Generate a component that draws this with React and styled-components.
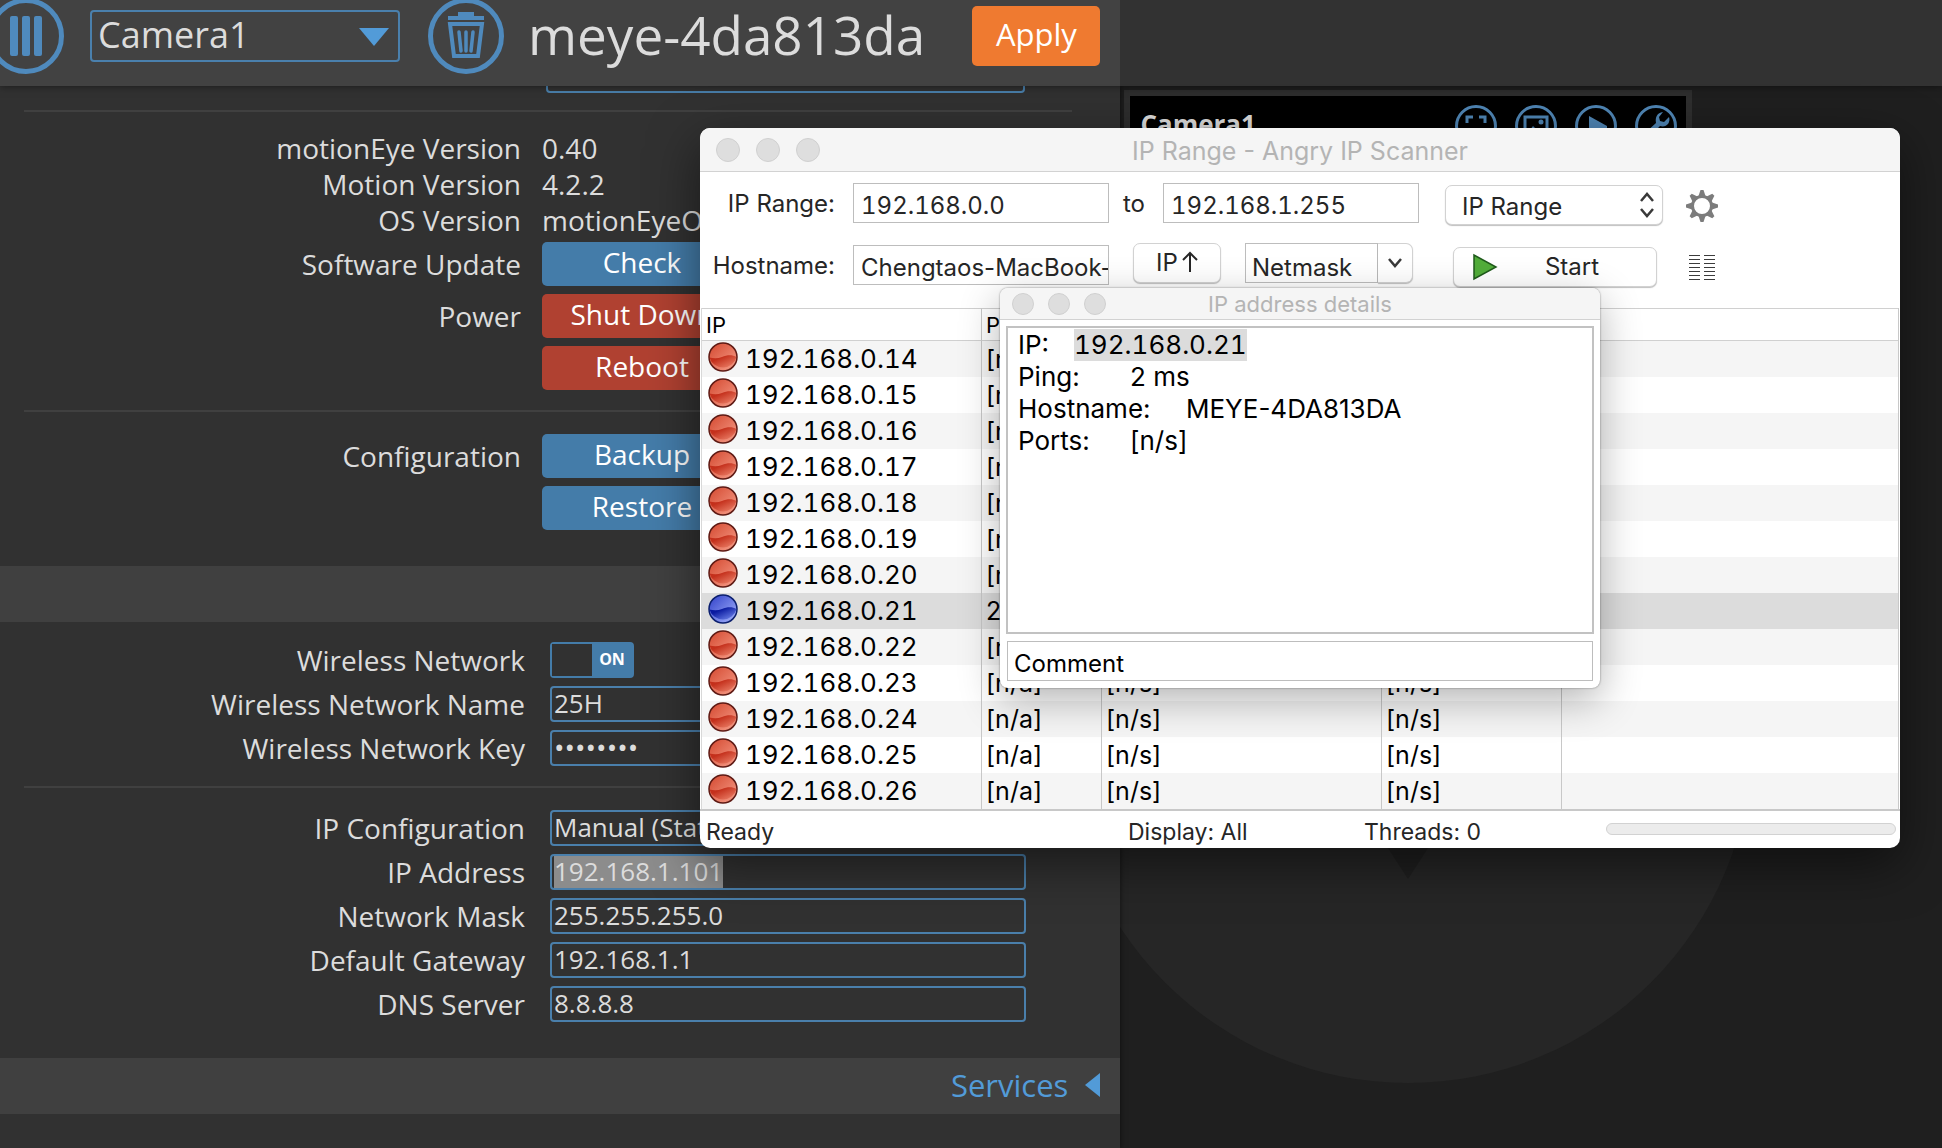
import React, { useEffect, useRef, useState } from "react";
import styled, { createGlobalStyle } from "styled-components";

const hosts = Array.from({ length: 13 }, (_, i) => {
  const last = 14 + i;
  const alive = last === 21;
  return {
    ip: `192.168.0.${last}`,
    alive,
    ping: alive ? "2 ms" : "[n/a]",
    hostname: alive ? "MEYE-4DA813DA" : "[n/s]",
    ports: "[n/s]",
  };
});

const Ball = ({ alive }) => (
  <BallIcon viewBox="0 0 30 30" aria-hidden="true">
    <defs>
      <linearGradient id={alive ? "up-top" : "down-top"} x1="0" y1="0" x2="1" y2="1">
        <stop offset="0" stopColor={alive ? "#2f3fc8" : "#d4482f"} />
        <stop offset="1" stopColor={alive ? "#a9b8ff" : "#f7a08c"} />
      </linearGradient>
      <linearGradient id={alive ? "up-low" : "down-low"} x1="0" y1="0" x2="1" y2="1">
        <stop offset="0.3" stopColor={alive ? "#0a1aa0" : "#c4301c"} />
        <stop offset="1" stopColor={alive ? "#7d93f5" : "#f08a72"} />
      </linearGradient>
    </defs>
    <circle cx="15" cy="15" r="14" fill={`url(#${alive ? "up-top" : "down-top"})`} />
    <path
      d="M1.5 15.5C6 16.5 10 16.5 14 15C19 13 24 12.500 28.500 15A14 14 0 0 1 1.500 15.500Z"
      fill={`url(#${alive ? "up-low" : "down-low"})`}
    />
    <circle cx="15" cy="15" r="14" fill="none" stroke={alive ? "#0b1f6e" : "#5e1a14"} strokeWidth="1.500" />
  </BallIcon>
);

const MenuIcon = () => (
  <svg width="76" height="76" viewBox="0 0 76 76" aria-hidden="true">
    <circle cx="38" cy="38" r="35.500" fill="none" stroke="#4f8abd" strokeWidth="5" />
    <g fill="#4f8abd">
      <rect x="22" y="18" width="8" height="40" rx="2" />
      <rect x="34" y="18" width="8" height="40" rx="2" />
      <rect x="46" y="18" width="8" height="40" rx="2" />
    </g>
  </svg>
);

const TrashIcon = () => (
  <svg width="76" height="76" viewBox="0 0 76 76" aria-hidden="true">
    <circle cx="38" cy="38" r="35.500" fill="none" stroke="#4f8abd" strokeWidth="5" />
    <path d="M20 18h10v-4h16v4h10v4H20z" fill="#4f8abd" />
    <path d="M22 26h32l-4 32H26z" fill="none" stroke="#4f8abd" strokeWidth="4" />
    <path d="M31 34l2 19M38 34v19M45 34l-2 19" stroke="#4f8abd" strokeWidth="3.500" strokeLinecap="round" />
  </svg>
);

const GearIcon = () => (
  <svg width="32" height="32" viewBox="-16 -16 32 32" aria-hidden="true">
    <circle r="9.500" fill="none" stroke="#7c7c7c" strokeWidth="3" />
    {[0, 45, 90, 135, 180, 225, 270, 315].map((a) => (
      <path key={a} d="M-3.500 -10L-1.500 -16H1.500L3.500 -10Z" fill="#7c7c7c" transform={`rotate(${a})`} />
    ))}
  </svg>
);

const StatsIcon = () => (
  <svg width="28" height="28" viewBox="0 0 28 28" aria-hidden="true">
    <path
      d="M1 1.500h11M1 5.500h11M1 9.500h11M1 13.500h11M1 17.500h11M1 21.500h11M1 25.500h11M16 1.500h11M16 5.500h11M16 9.500h11M16 13.500h11M16 17.500h11M16 21.500h11M16 25.500h11"
      stroke="#3c3c3c"
    />
  </svg>
);

const cameraIcons = [
  ["Fullscreen", <path key="f" d="M12 18v-6h6M24 12h6v6M12 24v6h6M24 30h6v-6" fill="none" strokeWidth="3" />],
  [
    "Pictures",
    <g key="p">
      <rect x="10" y="12" width="22" height="19" fill="none" strokeWidth="3" />
      <circle cx="26" cy="17" r="2.500" fill="#4f85b4" strokeWidth="0" />
      <path d="M12 29l6-8 4 4 3-2 5 6z" fill="#4f85b4" strokeWidth="0" />
    </g>,
  ],
  ["Movies", <path key="m" d="M14 11l18 10v2L14 33z" fill="#4f85b4" strokeWidth="0" />],
  [
    "Configure",
    <path
      key="c"
      d="M28 7l-4 5 1 4 4 1 5-5c2 6-3 11-9 9L14 32c-3 1-5-2-4-4l11-10c-1-6 1-10 7-11z"
      fill="#4f85b4"
      strokeWidth="0"
    />,
  ],
];

const App = () => {
  const [wifi, setWifi] = useState(true);
  const [net, setNet] = useState({
    mask: "255.255.255.0",
    gateway: "192.168.1.1",
    dns: "8.8.8.8",
  });
  const addressRef = useRef(null);

  // start with the address ready to be replaced
  useEffect(() => {
    addressRef.current.focus();
    addressRef.current.select();
  }, []);

  const change = (key) => (event) => setNet({ ...net, [key]: event.target.value });

  return (
    <Page>
      <GlobalStyle />
      <Header>
        <HeaderLeft>
          <RoundButton aria-label="Menu" $edge>
            <MenuIcon />
          </RoundButton>
          <SelectWrap>
            <CameraSelect aria-label="Camera" defaultValue="Camera1">
              <option>Camera1</option>
            </CameraSelect>
            <CameraArrow />
          </SelectWrap>
          <RoundButton aria-label="Remove camera">
            <TrashIcon />
          </RoundButton>
          <HostTitle>meye-4da813da</HostTitle>
          <ApplyButton>Apply</ApplyButton>
        </HeaderLeft>
      </Header>

      <Body>
        <Settings>
          <HiddenRow>
            <TextInput aria-label="Time zone" />
          </HiddenRow>
          <Divider $top={20} />
          <Info>
            <InfoRow><span>motionEye Version</span><span>0.40</span></InfoRow>
            <InfoRow><span>Motion Version</span><span>4.2.2</span></InfoRow>
            <InfoRow><span>OS Version</span><span>motionEyeOS</span></InfoRow>
          </Info>
          <ButtonRows>
            <ButtonRow><span>Software Update</span><PanelButton>Check</PanelButton></ButtonRow>
            <ButtonRow><span>Power</span><PanelButton $danger>Shut Down</PanelButton></ButtonRow>
            <ButtonRow><span /><PanelButton $danger>Reboot</PanelButton></ButtonRow>
          </ButtonRows>
          <Divider $top={20} />
          <ButtonRows $spaced>
            <ButtonRow><span>Configuration</span><PanelButton>Backup</PanelButton></ButtonRow>
            <ButtonRow><span /><PanelButton>Restore</PanelButton></ButtonRow>
          </ButtonRows>

          <SectionBar $top={36} />

          <Fields $top={20}>
            <FieldRow>
              <label htmlFor="wifi">Wireless Network</label>
              <Switch>
                <input id="wifi" type="checkbox" checked={wifi} onChange={() => setWifi(!wifi)} />
                <SwitchKnob />
                <SwitchText>{wifi ? "ON" : "OFF"}</SwitchText>
              </Switch>
            </FieldRow>
            <FieldRow>
              <label htmlFor="ssid">Wireless Network Name</label>
              <TextInput id="ssid" defaultValue="25H" />
            </FieldRow>
            <FieldRow>
              <label htmlFor="key">Wireless Network Key</label>
              <TextInput id="key" type="password" defaultValue="password" />
            </FieldRow>
          </Fields>
          <Divider $top={20} />
          <Fields $top={22}>
            <FieldRow>
              <label htmlFor="ipconf">IP Configuration</label>
              <FieldSelect id="ipconf" defaultValue="manual">
                <option value="manual">Manual (Static IP)</option>
                <option value="dhcp">Automatic (DHCP)</option>
              </FieldSelect>
            </FieldRow>
            <FieldRow>
              <label htmlFor="address">IP Address</label>
              <TextInput id="address" ref={addressRef} defaultValue="192.168.1.101" />
            </FieldRow>
            <FieldRow>
              <label htmlFor="mask">Network Mask</label>
              <TextInput id="mask" value={net.mask} onChange={change("mask")} />
            </FieldRow>
            <FieldRow>
              <label htmlFor="gateway">Default Gateway</label>
              <TextInput id="gateway" value={net.gateway} onChange={change("gateway")} />
            </FieldRow>
            <FieldRow>
              <label htmlFor="dns">DNS Server</label>
              <TextInput id="dns" value={net.dns} onChange={change("dns")} />
            </FieldRow>
          </Fields>
          <SectionBar $top={36}>
            Services
            <svg width="16" height="26" viewBox="0 0 16 26" aria-hidden="true">
              <path d="M16 1v24L1 13z" fill="#529bd8" />
            </svg>
          </SectionBar>
        </Settings>

        <Viewer>
          <EyeLogo viewBox="0 0 688 688" aria-hidden="true">
            <circle cx="344" cy="344" r="344" fill="#262626" />
            <path d="M270 370h148L344 484z" fill="#1f1f1f" />
          </EyeLogo>
          <CameraFrame>
            <CameraBar>
              <strong>Camera1</strong>
              {cameraIcons.map(([name, icon]) => (
                <CameraButton key={name} aria-label={name}>
                  <svg width="42" height="42" viewBox="0 0 42 42" stroke="#4f85b4">
                    <circle cx="21" cy="21" r="19.500" fill="none" strokeWidth="3" />
                    {icon}
                  </svg>
                </CameraButton>
              ))}
            </CameraBar>
          </CameraFrame>
        </Viewer>
      </Body>

      <ScannerWindow>
        <TitleBar>
          <Lights><i /><i /><i /></Lights>
          IP Range - Angry IP Scanner
        </TitleBar>
        <Toolbar>
          <ToolLabel htmlFor="from">IP Range:</ToolLabel>
          <ToolInput id="from" $digits defaultValue="192.168.0.0" />
          <Middle>
            <ToolLabel htmlFor="to">to</ToolLabel>
            <ToolInput id="to" $digits defaultValue="192.168.1.255" />
          </Middle>
          <MacSelectWrap>
            <MacSelect aria-label="Feeder" defaultValue="IP Range">
              <option>IP Range</option>
            </MacSelect>
            <svg width="16" height="26" viewBox="0 0 16 26" aria-hidden="true">
              <path d="M2 9l6-7 6 7M2 17l6 7 6-7" fill="none" stroke="#3a3a3a" strokeWidth="2.500" />
            </svg>
          </MacSelectWrap>
          <IconButton aria-label="Preferences"><GearIcon /></IconButton>

          <ToolLabel htmlFor="host">Hostname:</ToolLabel>
          <ToolInput id="host" defaultValue="Chengtaos-MacBook-Pro" />
          <Middle $second>
            <MacButton>
              IP
              <svg width="16" height="22" viewBox="0 0 16 22" aria-hidden="true">
                <path d="M8 21V2M1 9l7-7 7 7" fill="none" stroke="#262626" strokeWidth="2" />
              </svg>
            </MacButton>
            <NetmaskBox>
              <input aria-label="Netmask" defaultValue="Netmask" />
              <button aria-label="Choose netmask">
                <svg width="16" height="12" viewBox="0 0 16 12" aria-hidden="true">
                  <path d="M2 2l6 7 6-7" fill="none" stroke="#3a3a3a" strokeWidth="2.500" />
                </svg>
              </button>
            </NetmaskBox>
          </Middle>
          <StartButton>
            <svg width="26" height="28" viewBox="0 0 26 28" aria-hidden="true">
              <path d="M2 2v24l22-12z" fill="#52ae3a" stroke="#1f5a1b" strokeWidth="1.500" />
            </svg>
            <span>Start</span>
          </StartButton>
          <IconButton aria-label="Statistics"><StatsIcon /></IconButton>
        </Toolbar>

        <HostTable>
          <colgroup>
            <col width="279" />
            <col width="120" />
            <col width="280" />
            <col width="180" />
            <col />
          </colgroup>
          <thead>
            <tr>
              <th>IP</th>
              <th>Ping</th>
              <th>Hostname</th>
              <th>Ports</th>
              <th />
            </tr>
          </thead>
          <tbody>
            {hosts.map((host) => (
              <HostRow key={host.ip} $selected={host.alive}>
                <td>
                  <Ball alive={host.alive} />
                  {host.ip}
                </td>
                <td>{host.ping}</td>
                <td>{host.hostname}</td>
                <td>{host.ports}</td>
                <td />
              </HostRow>
            ))}
          </tbody>
        </HostTable>

        <StatusBar>
          <span>Ready</span>
          <span>Display: All</span>
          <span>Threads: 0</span>
          <Progress />
        </StatusBar>
      </ScannerWindow>

      <DetailsWindow>
        <TitleBar $small>
          <Lights $small><i /><i /><i /></Lights>
          IP address details
        </TitleBar>
        <DetailsText>
          {"IP:\t"}<mark>192.168.0.21</mark>
          {"\nPing:\t2 ms\nHostname:\tMEYE-4DA813DA\nPorts:\t[n/s]"}
        </DetailsText>
        <CommentInput aria-label="Comment" defaultValue="Comment" />
      </DetailsWindow>
    </Page>
  );
};

const GlobalStyle = createGlobalStyle`
  * {
    box-sizing: border-box;
  }

  body {
    margin: 0;
    background: #1f1f1f;
  }

  button, input, select {
    font: inherit;
    color: inherit;
  }

  button {
    cursor: pointer;
  }
`;

const Page = styled.div`
  position: relative;
  display: flex;
  flex-direction: column;
  height: 100vh;
  overflow: hidden;
  color: #dcdcdc;
  font-family: "Open Sans", sans-serif;
  font-size: 28px;
`;

const Header = styled.header`
  position: relative;
  z-index: 2;
  display: grid;
  grid-template-columns: 15fr 11fr;
  flex: none;
  background: #323232;
  box-shadow: 0 0 8px rgba(0, 0, 0, 0.5);
`;

const HeaderLeft = styled.div`
  display: flex;
  align-items: center;
  height: 86px;
  padding: 0 20px 14px 0;
  background: #424242;
`;

const RoundButton = styled.button`
  flex: none;
  display: flex;
  margin: 0;
  margin-left: ${(props) => (props.$edge ? "-12px" : "28px")};
  padding: 0;
  border: none;
  background: none;
`;

const SelectWrap = styled.div`
  position: relative;
  flex: none;
  width: 310px;
  margin-left: 26px;
`;

const CameraSelect = styled.select`
  display: block;
  appearance: none;
  width: 100%;
  height: 52px;
  padding: 0 6px 2px;
  border: 2px solid #4a80ad;
  border-radius: 4px;
  background: transparent;
  font-size: 36px;
  line-height: 44px;
`;

const CameraArrow = styled.span`
  position: absolute;
  top: 18px;
  right: 11px;
  border: 15px solid transparent;
  border-top: 18px solid #529bd8;
  border-bottom: none;
  pointer-events: none;
`;

const HostTitle = styled.div`
  flex: 1;
  margin-left: 24px;
  padding-bottom: 2px;
  font-size: 53px;
  line-height: 64px;
  white-space: nowrap;
`;

const ApplyButton = styled.button`
  width: 128px;
  height: 60px;
  padding: 0 0 4px;
  border: none;
  border-radius: 5px;
  background: #ef7a30;
  color: #fff;
  font-size: 31px;
`;

const Body = styled.div`
  display: grid;
  grid-template-columns: 15fr 11fr;
  flex: 1;
  min-height: 0;
`;

const Settings = styled.section`
  position: relative;
  z-index: 1;
  background: #313131;
  box-shadow: 0 0 6px rgba(0, 0, 0, 0.6);
`;

const HiddenRow = styled.div`
  height: 36px;
  margin-top: -32px;
  padding: 0 95px 0 546px;
`;

const Divider = styled.hr`
  height: 2px;
  margin: ${(props) => props.$top}px 48px 0 24px;
  border: none;
  background: #404040;
`;

const Info = styled.div`
  padding-top: 18px;
`;

const InfoRow = styled.div`
  display: grid;
  grid-template-columns: 521px 1fr;
  column-gap: 21px;
  line-height: 36px;

  span:first-child {
    text-align: right;
  }
`;

const ButtonRows = styled.div`
  display: flex;
  flex-direction: column;
  gap: 8px;
  padding-top: ${(props) => (props.$spaced ? "22px" : "4px")};
`;

const ButtonRow = styled(InfoRow)`
  line-height: 44px;
`;

const PanelButton = styled.button`
  width: 200px;
  height: 44px;
  padding: 0 0 4px;
  border: none;
  border-radius: 5px;
  background: ${(props) => (props.$danger ? "#b04131" : "#447ca9")};
  color: #fff;
  line-height: 40px;
`;

const SectionBar = styled.div`
  display: flex;
  align-items: center;
  justify-content: flex-end;
  gap: 16px;
  height: 56px;
  margin-top: ${(props) => props.$top}px;
  padding: 0 20px 2px 0;
  background: #404040;
  color: #529bd8;
  font-size: 31px;
`;

const Fields = styled.div`
  display: flex;
  flex-direction: column;
  gap: 8px;
  padding-top: ${(props) => props.$top}px;
`;

const FieldRow = styled.div`
  display: grid;
  grid-template-columns: 525px 1fr;
  column-gap: 25px;
  padding-right: 94px;
  line-height: 36px;

  > label:first-child {
    text-align: right;
  }
`;

const TextInput = styled.input`
  width: 100%;
  height: 36px;
  padding: 0 2px 2px;
  border: 2px solid #4a7fab;
  border-radius: 4px;
  outline: none;
  background: transparent;
  font-size: 26px;
  line-height: 28px;

  &[type="password"] {
    font-size: 28px;
  }

  &::selection {
    background: #8c8c8c;
    color: #dcdcdc;
  }
`;

const FieldSelect = styled(TextInput).attrs({ as: "select" })`
  appearance: none;
`;

const Switch = styled.label`
  display: flex;
  width: 84px;
  height: 36px;
  border: 2px solid #447ca9;
  border-radius: 4px;
  background: #447ca9;
  cursor: pointer;

  input {
    position: absolute;
    opacity: 0;
  }
`;

const SwitchKnob = styled.span`
  width: 40px;
  background: #313131;
`;

const SwitchText = styled.span`
  flex: 1;
  color: #fff;
  font-size: 16px;
  font-weight: bold;
  line-height: 30px;
  text-align: center;
`;

const Viewer = styled.main`
  position: relative;
  padding: 4px 250px 0 4px;
  background: #1f1f1f;
`;

const EyeLogo = styled.svg`
  position: absolute;
  top: 309px;
  left: -56px;
  width: 688px;
  height: 688px;
`;

const CameraFrame = styled.div`
  position: relative;
  height: 420px;
  padding: 6px;
  background: #2e2e2e;
`;

const CameraBar = styled.div`
  display: flex;
  align-items: flex-start;
  gap: 18px;
  height: 100%;
  padding: 9px 9px 0 10px;
  background: #000;

  strong {
    flex: 1;
    color: #dcdcdc;
    font-size: 26px;
    line-height: 38px;
  }
`;

const CameraButton = styled.button`
  display: flex;
  padding: 0;
  border: none;
  background: none;
`;

const MacWindow = styled.div`
  position: absolute;
  z-index: 3;
  display: flex;
  flex-direction: column;
  background: #fff;
  color: #262626;
  font-family: Inter, "Liberation Sans", sans-serif;
`;

const ScannerWindow = styled(MacWindow)`
  top: 128px;
  left: 700px;
  width: 1200px;
  height: 720px;
  overflow: clip;
  border-radius: 10px;
  box-shadow: 0 16px 50px rgba(0, 0, 0, 0.5);
  font-size: 24px;
`;

const DetailsWindow = styled(MacWindow)`
  top: 288px;
  left: 1000px;
  width: 600px;
  height: 400px;
  overflow: clip;
  border-radius: 8px;
  box-shadow: 0 0 2px rgba(0, 0, 0, 0.5), 0 12px 40px rgba(0, 0, 0, 0.3);
  color: #000;
`;

const TitleBar = styled.div`
  position: relative;
  flex: none;
  height: ${(props) => (props.$small ? "32px" : "44px")};
  border-bottom: 1px solid #d2d2d2;
  background: #f5f5f5;
  color: #b4b4b4;
  font-size: ${(props) => (props.$small ? "22px" : "25px")};
  line-height: ${(props) => (props.$small ? "32px" : "46px")};
  text-align: center;
`;

const Lights = styled.div`
  position: absolute;
  inset: 0 auto 0 ${(props) => (props.$small ? "12px" : "16px")};
  display: flex;
  align-items: center;
  gap: ${(props) => (props.$small ? "14px" : "16px")};

  i {
    width: ${(props) => (props.$small ? "22px" : "24px")};
    aspect-ratio: 1;
    border: 1px solid #d0d0d0;
    border-radius: 50%;
    background: #dedede;
  }
`;

const Toolbar = styled.div`
  display: grid;
  grid-template-columns: 135px 274px 310px 244px 1fr;
  grid-template-rows: 40px 40px;
  gap: 22px 0;
  align-items: center;
  align-content: start;
  flex: none;
  height: 136px;
  padding-top: 11px;
`;

const ToolLabel = styled.label`
  text-align: right;
`;

const ToolInput = styled.input`
  width: 256px;
  height: 40px;
  margin-left: 18px;
  padding: 4px 0 0 7px;
  border: 1px solid #bdbdbd;
  background: #fff;
  outline: none;
  font-variant-numeric: ${(props) => (props.$digits ? "tabular-nums" : "normal")};
`;

const Middle = styled.div`
  display: flex;
  align-items: center;
  gap: ${(props) => (props.$second ? "24px" : "0")};
  margin-top: ${(props) => (props.$second ? "-4px" : "0")};
  padding-left: ${(props) => (props.$second ? "24px" : "14px")};
`;

const MacButton = styled.button`
  display: flex;
  flex: none;
  align-items: center;
  justify-content: center;
  gap: 4px;
  width: 88px;
  height: 40px;
  padding: 0 0 2px;
  border: 1px solid #d2d2d2;
  border-radius: 7px;
  background: #fff;
  box-shadow: 0 1px 1px rgba(0, 0, 0, 0.25);
`;

const MacSelectWrap = styled.div`
  position: relative;
  margin: 3px 0 0 26px;

  svg {
    position: absolute;
    top: 7px;
    right: 8px;
    pointer-events: none;
  }
`;

const MacSelect = styled.select`
  display: block;
  appearance: none;
  width: 100%;
  height: 40px;
  padding: 4px 16px 0;
  border: 1px solid #d2d2d2;
  border-radius: 7px;
  background: #fff;
  box-shadow: 0 1px 1px rgba(0, 0, 0, 0.25);
`;

const IconButton = styled.button`
  display: flex;
  justify-content: center;
  width: 32px;
  margin: 6px 0 0 23px;
  padding: 0;
  border: none;
  background: none;
`;

const NetmaskBox = styled.div`
  display: flex;
  width: 168px;
  height: 40px;

  input {
    flex: 1;
    min-width: 0;
    padding: 9px 0 0 6px;
    border: 1px solid #bdbdbd;
    outline: none;
    background: #fff;
  }

  button {
    display: flex;
    align-items: center;
    justify-content: center;
    width: 35px;
    padding: 0;
    border: 1px solid #d2d2d2;
    border-left: none;
    border-radius: 0 7px 7px 0;
    background: #fff;
    box-shadow: 0 1px 1px rgba(0, 0, 0, 0.25);
  }
`;

const StartButton = styled(MacButton)`
  gap: 0;
  width: 204px;
  margin: 3px 0 0 34px;
  padding: 0 10px 0 18px;

  span {
    flex: 1;
    text-align: center;
  }
`;

const HostTable = styled.table`
  flex: none;
  width: 1198px;
  margin: 0 1px;
  border-collapse: separate;
  border-spacing: 0;
  border-left: 1px solid #d8d8d8;
  border-right: 1px solid #c8c8c8;
  table-layout: fixed;
  color: #000;

  th {
    height: 33px;
    padding: 0 4px;
    border-top: 1px solid #d0d0d0;
    border-bottom: 1px solid #d0d0d0;
    font-size: 22px;
    font-weight: normal;
    line-height: 30px;
    text-align: left;
  }

  td {
    height: 36px;
    padding: 0 4px 1px;
    font-size: 25px;
    line-height: 34px;
    white-space: nowrap;
  }

  td:first-child {
    font-size: 26px;
    font-variant-numeric: tabular-nums;
  }

  th + th, td + td {
    border-left: 1px solid #c8c8c8;
  }
`;

const HostRow = styled.tr`
  background: #fff;

  &:nth-child(odd) {
    background: #f5f5f5;
  }

  && {
    ${(props) => props.$selected && "background: #dcdcdc;"}
  }
`;

const BallIcon = styled.svg`
  width: 30px;
  height: 30px;
  margin: -7px 7px 0 2px;
  vertical-align: middle;
`;

const StatusBar = styled.div`
  display: grid;
  grid-template-columns: 422px 236px 1fr 290px;
  align-items: center;
  flex: 1;
  padding: 4px 4px 0 6px;
  border-top: 2px solid #c8c8c8;
  font-size: 23px;
`;

const Progress = styled.div`
  height: 12px;
  margin-bottom: 6px;
  border: 1px solid #d2d2d2;
  border-radius: 6px;
  background: #ececec;
`;

const DetailsText = styled.pre`
  flex: 1;
  margin: 6px 6px 7px;
  padding: 1px 10px 0;
  border: 2px solid #c2c2c2;
  font-family: inherit;
  font-size: 26px;
  line-height: 32px;
  tab-size: 56px;

  mark {
    display: inline-block;
    background: #dcdcdc;
    color: inherit;
    font-variant-numeric: tabular-nums;
  }
`;

const CommentInput = styled.input`
  height: 40px;
  margin: 0 7px 7px;
  padding: 5px 6px 0;
  border: 1px solid #bdbdbd;
  outline: none;
  font-size: 24px;
`;

export default App;
